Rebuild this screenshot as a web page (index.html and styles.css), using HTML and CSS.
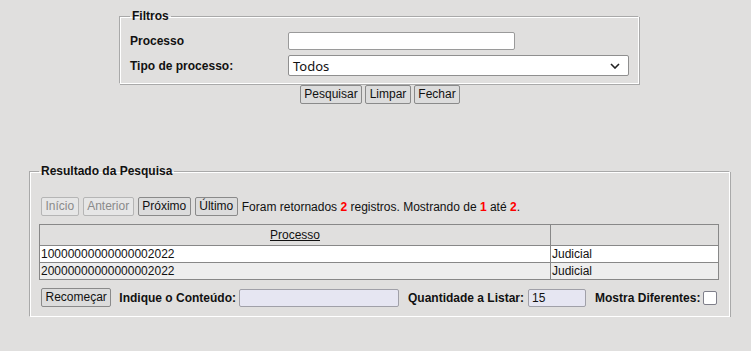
FILE: index.html
```html
<!DOCTYPE html>
<html lang="pt">
<head>
<meta charset="utf-8">
<title>Pesquisa</title>
<link rel="stylesheet" href="styles.css">
</head>
<body>
<div class="top">
  <fieldset class="filtros">
    <legend>Filtros</legend>
    <div class="form-grid">
      <label class="lbl">Processo</label>
      <input class="txt" type="text">
      <label class="lbl">Tipo de processo:</label>
      <div class="select">
        <span>Todos</span>
        <svg class="chev" width="10" height="6" viewBox="0 0 10 6"><path d="M1 1 L5 5 L9 1" fill="none" stroke="#222" stroke-width="1.6"/></svg>
      </div>
    </div>
  </fieldset>
  <div class="actions">
    <button class="btn">Pesquisar</button>
    <button class="btn">Limpar</button>
    <button class="btn">Fechar</button>
  </div>
</div>

<fieldset class="resultado">
  <legend>Resultado da Pesquisa</legend>
  <div class="pager">
    <button class="btn" disabled>Início</button>
    <button class="btn" disabled>Anterior</button>
    <button class="btn">Próximo</button>
    <button class="btn">Último</button>
    <span class="info">Foram retornados <b class="red">2</b> registros. Mostrando de <b class="red">1</b> até <b class="red">2</b>.</span>
  </div>
  <table class="grid">
    <thead>
      <tr><th class="c1"><u>Processo</u></th><th class="c2"></th></tr>
    </thead>
    <tbody>
      <tr class="odd"><td>10000000000000002022</td><td>Judicial</td></tr>
      <tr class="even"><td>20000000000000002022</td><td>Judicial</td></tr>
    </tbody>
  </table>
  <div class="bottom">
    <button class="btn">Recomeçar</button>
    <label class="blbl l1">Indique o Conteúdo:</label>
    <input class="lav w1" type="text">
    <label class="blbl l2">Quantidade a Listar:</label>
    <input class="lav w2" type="text" value="15">
    <label class="blbl l3">Mostra Diferentes:</label>
    <span class="chk"></span>
  </div>
</fieldset>
</body>
</html>
```
FILE: styles.css
```css
html, body {
  margin: 0;
  padding: 0;
  background: #e0dfde;
  font-family: "Liberation Sans", Arial, sans-serif;
  font-size: 12px;
  color: #111;
}
.top {
  margin-left: 119px;
  width: 520px;
  padding-top: 9px;
}
fieldset {
  margin: 0;
  border: 1px solid #a9a9a9;
  border-color: #a9a9a9 #fff #fff #a9a9a9;
  box-shadow: inset 1px 1px 0 #fff, 1px 1px 0 #a9a9a9;
}
legend {
  font-weight: bold;
  padding: 0 2px;
  line-height: 15px;
}
.filtros {
  padding: 8px 9px 7px 10px;
}
.form-grid {
  display: grid;
  grid-template-columns: 158px 1fr;
  row-gap: 5px;
  align-items: center;
}
.lbl {
  font-weight: bold;
  white-space: nowrap;
}
.txt {
  box-sizing: border-box;
  width: 227px;
  height: 18px;
  margin: 0;
  border: 1px solid #9a9a9a;
  border-radius: 2px;
  background: #fff;
  padding: 0 3px;
  font: inherit;
}
.select {
  box-sizing: border-box;
  width: 341px;
  height: 21px;
  border: 1px solid #8f8f8f;
  border-radius: 2px;
  background: #fff;
  display: flex;
  align-items: center;
  justify-content: space-between;
  padding: 0 8px 0 4px;
  font-family: "Noto Sans", "Open Sans", sans-serif;
  font-size: 13px;
  color: #111;
}
.actions {
  display: flex;
  justify-content: center;
  gap: 3px;
  padding-top: 1px;
  padding-left: 2px;
}
.btn {
  box-sizing: border-box;
  height: 19px;
  margin: 0;
  padding: 0 3.5px;
  font: inherit;
  font-size: 12px;
  line-height: 17px;
  color: #111;
  background: #dcdcdc;
  border: 1px solid #8a8a8a;
  border-radius: 2px;
  white-space: nowrap;
}
.btn:disabled {
  color: #8a8a8a;
  background: #e6e6e6;
  border-color: #b5b5b5;
}
.resultado {
  margin: 60px 0 0 29px;
  width: 701px;
  box-sizing: border-box;
  padding: 18px 9px 9px 9px;
}
.pager {
  display: flex;
  align-items: center;
  gap: 4px;
  padding-left: 2px;
  height: 19px;
  white-space: nowrap;
}
.red {
  color: #f00;
}
.grid {
  margin-top: 8px;
  width: 680px;
  border-collapse: collapse;
  border: 1px solid #888;
}
.grid th, .grid td {
  border: 1px solid #888;
  padding: 0 1px;
  text-align: left;
  font-weight: normal;
}
.grid th {
  height: 20px;
  text-align: center;
  background: #e0dfde;
}
.grid .c1 { width: 508px; }
.grid td {
  height: 16px;
  line-height: 16px;
}
.odd { background: #fff; }
.even { background: #eeeeee; }
.bottom {
  display: flex;
  align-items: center;
  margin-top: 8px;
  padding-left: 2px;
  height: 19px;
  white-space: nowrap;
}
.blbl {
  font-weight: bold;
}
.l1 { margin-left: 8px; margin-right: 3px; }
.l2 { margin-left: 9px; margin-right: 4px; }
.l3 { margin-left: 9px; margin-right: 3px; }
.lav {
  box-sizing: border-box;
  height: 18px;
  margin: 0;
  border: 1px solid #a0a0a8;
  border-radius: 2px;
  background: #e6e6f2;
  padding: 0 3px;
  font: inherit;
  color: #111;
}
.w1 { width: 160px; }
.w2 { width: 58px; }
.chk {
  box-sizing: border-box;
  width: 14px;
  height: 14px;
  border: 1px solid #7f7f8a;
  border-radius: 2px;
  background: #fff;
  display: inline-block;
}
```
